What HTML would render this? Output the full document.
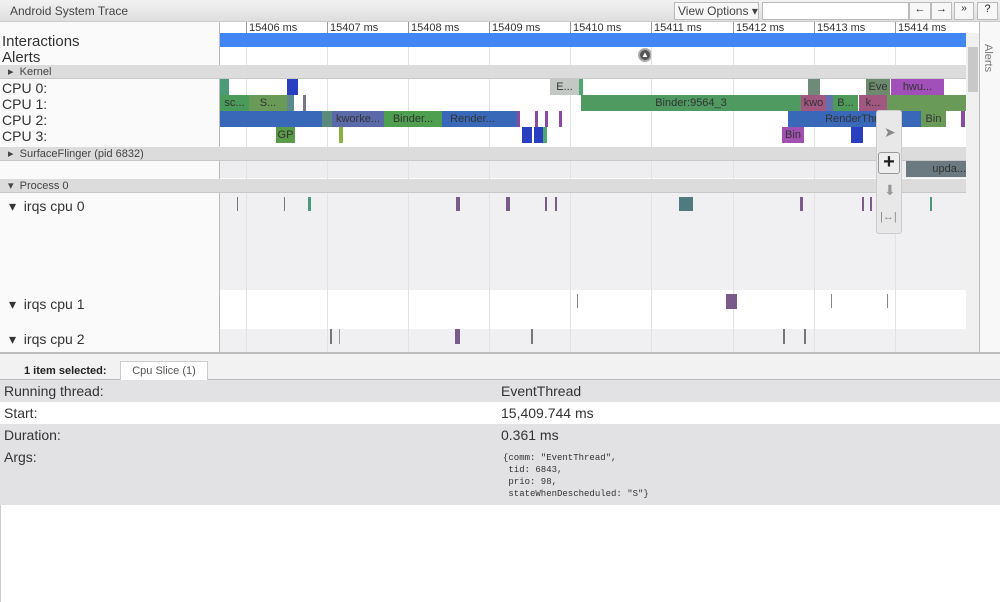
<!DOCTYPE html>
<html><head><style>
*{margin:0;padding:0;box-sizing:border-box}
body{width:1000px;height:602px;background:#fff;font-family:"Liberation Sans",sans-serif;position:relative;overflow:hidden;color:#222}
.a{position:absolute}
.lbl{position:absolute;left:2px;font-size:14px;color:#333}
.hdr{position:absolute;left:0;width:966px;height:14px;background:#dcdcdc;border-bottom:1px solid #c8c8c8;font-size:11px;color:#444;padding-left:8px;line-height:14px}
.s{position:absolute;height:16px;font-size:11px;line-height:16px;text-align:center;overflow:hidden;white-space:nowrap;color:#333}
.t{position:absolute;top:22px;font-size:11px;color:#333;border-left:1px solid #999;padding-left:2px;height:12px;line-height:12px}
.g{position:absolute;width:1px;background:#e2e2e2;top:47px;height:305px}
.row{position:absolute;left:0;width:1000px;height:22px;font-size:14px;line-height:22px;padding-left:4px;color:#333}
</style></head><body>
<div class="a" style="left:0;top:0;width:1000px;height:22px;background:linear-gradient(#f2f2f2,#dedede);border-bottom:1px solid #ccc"></div>
<div class="a" style="left:10px;top:4px;font-size:12px;color:#444">Android System Trace</div>
<div class="a" style="left:674px;top:2px;width:85px;height:18px;border:1px solid #bbb;background:#f7f7f7;font-size:12px;line-height:16px;padding-left:3px;color:#444">View Options ▾</div>
<div class="a" style="left:762px;top:2px;width:147px;height:18px;border:1px solid #bbb;background:#fff"></div>
<div class="a" style="left:909px;top:2px;width:22px;height:18px;border:1px solid #bbb;background:#f7f7f7;font-size:11px;text-align:center">←</div>
<div class="a" style="left:931px;top:2px;width:21px;height:18px;border:1px solid #bbb;background:#f7f7f7;font-size:11px;text-align:center">→</div>
<div class="a" style="left:954px;top:2px;width:20px;height:18px;border:1px solid #bbb;background:#f7f7f7;font-size:10px;text-align:center">»</div>
<div class="a" style="left:977px;top:2px;width:21px;height:18px;border:1px solid #bbb;background:#f7f7f7;font-size:11px;text-align:center">?</div>
<!-- left label column bg -->
<div class="a" style="left:0;top:22px;width:220px;height:330px;background:#fafafa;border-right:1px solid #bbb"></div>
<!-- ruler -->
<div class="t" style="left:246px">15406 ms</div><div class="t" style="left:327px">15407 ms</div><div class="t" style="left:408px">15408 ms</div><div class="t" style="left:489px">15409 ms</div><div class="t" style="left:570px">15410 ms</div><div class="t" style="left:651px">15411 ms</div><div class="t" style="left:733px">15412 ms</div><div class="t" style="left:814px">15413 ms</div><div class="t" style="left:895px">15414 ms</div>
<div class="a" style="left:220px;top:33px;width:746px;height:14px;background:#4285f4"></div>
<div class="lbl" style="top:33px;font-size:15px">Interactions</div>
<div class="lbl" style="top:49px;font-size:15px">Alerts</div>
<div class="a" style="left:638px;top:48px;width:14px;height:14px;border-radius:50%;background:#555;border:2px solid #aaa;color:#fff;font-size:8px;text-align:center;line-height:10px">▲</div>
<!-- process gray bgs -->
<div class="a" style="left:220px;top:161px;width:746px;height:17px;background:#eeeef0"></div>
<div class="a" style="left:220px;top:193px;width:746px;height:97px;background:#f0f0f2"></div>
<div class="a" style="left:220px;top:329px;width:746px;height:23px;background:#f0f0f2"></div>
<div class="g" style="left:246px"></div><div class="g" style="left:327px"></div><div class="g" style="left:408px"></div><div class="g" style="left:489px"></div><div class="g" style="left:570px"></div><div class="g" style="left:651px"></div><div class="g" style="left:733px"></div><div class="g" style="left:814px"></div><div class="g" style="left:895px"></div>
<div class="hdr" style="top:65px">▸ &nbsp;Kernel</div>
<div class="lbl" style="top:80px">CPU 0:</div><div class="lbl" style="top:96px">CPU 1:</div><div class="lbl" style="top:112px">CPU 2:</div><div class="lbl" style="top:128px">CPU 3:</div>
<!-- CPU0 -->
<div class="s" style="top:79px;left:220px;width:9px;background:#4c9a78"></div>
<div class="s" style="top:79px;left:287px;width:11px;background:#2a3fc0"></div>
<div class="s" style="top:79px;left:550px;width:29px;background:#c4c8c4">E...</div>
<div class="s" style="top:79px;left:579px;width:4px;background:#4aa870"></div>
<div class="s" style="top:79px;left:808px;width:12px;background:#6e8a78"></div>
<div class="s" style="top:79px;left:866px;width:24px;background:#6e8a6e">Eve</div>
<div class="s" style="top:79px;left:891px;width:53px;background:#a050b8">hwu...</div>
<!-- CPU1 -->
<div class="s" style="top:95px;left:220px;width:29px;background:#4a9a5a">sc...</div>
<div class="s" style="top:95px;left:249px;width:38px;background:#6a9a58">S...</div>
<div class="s" style="top:95px;left:287px;width:7px;background:#5a8a90"></div>
<div class="s" style="top:95px;left:303px;width:3px;background:#778"></div>
<div class="s" style="top:95px;left:581px;width:220px;background:#4e9a60">Binder:9564_3</div>
<div class="s" style="top:95px;left:801px;width:25px;background:#a05880">kwo</div>
<div class="s" style="top:95px;left:826px;width:7px;background:#6070b0"></div>
<div class="s" style="top:95px;left:833px;width:25px;background:#4e9a58">B...</div>
<div class="s" style="top:95px;left:859px;width:28px;background:#a05880">k...</div>
<div class="s" style="top:95px;left:887px;width:79px;background:#6a9a58"></div>
<!-- CPU2 -->
<div class="s" style="top:111px;left:220px;width:102px;background:#3a68b8"></div>
<div class="s" style="top:111px;left:322px;width:10px;background:#5a8a7a"></div>
<div class="s" style="top:111px;left:332px;width:52px;background:#5a6aa8">kworke...</div>
<div class="s" style="top:111px;left:384px;width:58px;background:#4ea050">Binder...</div>
<div class="s" style="top:111px;left:442px;width:61px;background:#3a68b8">Render...</div>
<div class="s" style="top:111px;left:503px;width:14px;background:#3a68b8"></div>
<div class="s" style="top:111px;left:517px;width:3px;background:#8a4aa0"></div>
<div class="s" style="top:111px;left:535px;width:3px;background:#8a4aa0"></div>
<div class="s" style="top:111px;left:545px;width:3px;background:#8a4aa0"></div>
<div class="s" style="top:111px;left:559px;width:3px;background:#8a4aa0"></div>
<div class="s" style="top:111px;left:788px;width:133px;background:#3a68b8">RenderThre</div>
<div class="s" style="top:111px;left:921px;width:25px;background:#6a9a58">Bin</div>
<div class="s" style="top:111px;left:961px;width:4px;background:#8a4aa0"></div>
<!-- CPU3 -->
<div class="s" style="top:127px;left:276px;width:19px;background:#5a9a48">GP</div>
<div class="s" style="top:127px;left:339px;width:4px;background:#8ab040"></div>
<div class="s" style="top:127px;left:522px;width:10px;background:#2a3fc0"></div>
<div class="s" style="top:127px;left:534px;width:9px;background:#2a3fc0"></div>
<div class="s" style="top:127px;left:543px;width:4px;background:#4aa870"></div>
<div class="s" style="top:127px;left:782px;width:22px;background:#a050b0">Bin</div>
<div class="s" style="top:127px;left:851px;width:12px;background:#2a3fc0"></div>
<div class="hdr" style="top:147px">▸ &nbsp;SurfaceFlinger (pid 6832)</div>
<div class="s" style="top:161px;left:906px;width:60px;background:#6a7a80;text-align:right">upda...</div>
<div class="hdr" style="top:179px">▾ &nbsp;Process 0</div>
<div class="lbl" style="top:198px;left:9px">▾ &nbsp;irqs cpu 0</div>
<div class="lbl" style="top:296px;left:9px">▾ &nbsp;irqs cpu 1</div>
<div class="lbl" style="top:331px;left:9px">▾ &nbsp;irqs cpu 2</div>
<!-- irq marks -->
<div class="a" style="top:197px;left:237px;width:1px;height:14px;background:#777"></div>
<div class="a" style="top:197px;left:284px;width:1px;height:14px;background:#777"></div>
<div class="a" style="top:197px;left:308px;width:3px;height:14px;background:#4a9a7a"></div>
<div class="a" style="top:197px;left:456px;width:4px;height:14px;background:#7a5a8a"></div>
<div class="a" style="top:197px;left:506px;width:4px;height:14px;background:#7a5a8a"></div>
<div class="a" style="top:197px;left:545px;width:2px;height:14px;background:#7a5a8a"></div>
<div class="a" style="top:197px;left:555px;width:2px;height:14px;background:#7a5a8a"></div>
<div class="a" style="top:197px;left:679px;width:14px;height:14px;background:#4e7a80"></div>
<div class="a" style="top:197px;left:800px;width:3px;height:14px;background:#7a5a8a"></div>
<div class="a" style="top:197px;left:862px;width:2px;height:14px;background:#7a5a8a"></div>
<div class="a" style="top:197px;left:870px;width:2px;height:14px;background:#7a5a8a"></div>
<div class="a" style="top:197px;left:930px;width:2px;height:14px;background:#4a9a7a"></div>
<div class="a" style="top:294px;left:577px;width:1px;height:14px;background:#888"></div>
<div class="a" style="top:294px;left:726px;width:11px;height:15px;background:#7a5a8a"></div>
<div class="a" style="top:294px;left:831px;width:1px;height:14px;background:#888"></div>
<div class="a" style="top:294px;left:887px;width:1px;height:14px;background:#888"></div>
<div class="a" style="top:329px;left:330px;width:2px;height:15px;background:#777"></div>
<div class="a" style="top:329px;left:339px;width:1px;height:15px;background:#999"></div>
<div class="a" style="top:329px;left:455px;width:5px;height:15px;background:#7a5a8a"></div>
<div class="a" style="top:329px;left:531px;width:2px;height:15px;background:#777"></div>
<div class="a" style="top:329px;left:783px;width:2px;height:15px;background:#777"></div>
<div class="a" style="top:329px;left:804px;width:2px;height:15px;background:#777"></div>
<!-- tool palette -->
<div class="a" style="left:876px;top:110px;width:26px;height:124px;background:#e8e8e8;border:1px solid #ccc;border-radius:3px"></div>
<div class="a" style="left:884px;top:124px;font-size:14px;color:#888">➤</div>
<div class="a" style="left:878px;top:152px;width:22px;height:22px;border:1px solid #999;border-radius:3px;background:#eee;font-size:20px;line-height:19px;text-align:center;font-weight:bold">+</div>
<div class="a" style="left:884px;top:182px;font-size:14px;color:#999">⬇</div>
<div class="a" style="left:880px;top:211px;font-size:11px;color:#888">|↔|</div>
<!-- scrollbar -->
<div class="a" style="left:966px;top:33px;width:13px;height:319px;background:#f0f0f0"></div>
<div class="a" style="left:968px;top:47px;width:10px;height:45px;background:#c8c8c8"></div>
<div class="a" style="left:979px;top:22px;width:21px;height:330px;background:#f8f8f8;border-left:1px solid #bbb"></div>
<div class="a" style="left:982px;top:44px;font-size:11px;color:#777;writing-mode:vertical-rl">Alerts</div>
<!-- bottom panel -->
<div class="a" style="left:0;top:352px;width:1000px;height:28px;background:#f2f2f2;border-top:2px solid #bbb;border-bottom:1px solid #bbb"></div>
<div class="a" style="left:24px;top:365px;font-size:11px;font-weight:bold;color:#222">1 item selected:</div>
<div class="a" style="left:120px;top:361px;width:88px;height:20px;background:#fff;border:1px solid #ccc;border-bottom:none;font-size:11px;color:#555;text-align:center;line-height:19px">Cpu Slice (1)</div>
<div class="row" style="top:380px;background:#e2e2e4">Running thread:<span class="a" style="left:501px">EventThread</span></div>
<div class="row" style="top:402px;background:#fff">Start:<span class="a" style="left:501px">15,409.744 ms</span></div>
<div class="row" style="top:424px;background:#e2e2e4">Duration:<span class="a" style="left:501px">0.361 ms</span></div>
<div class="row" style="top:446px;height:59px;background:#e2e2e4">Args:<span class="a" style="left:503px;top:6px;font-family:'Liberation Mono',monospace;font-size:9px;line-height:12px;white-space:pre">{comm: "EventThread",
 tid: 6843,
 prio: 98,
 stateWhenDescheduled: "S"}</span></div>
<div class="a" style="left:0;top:505px;width:1px;height:97px;background:#ccc"></div>
</body></html>
